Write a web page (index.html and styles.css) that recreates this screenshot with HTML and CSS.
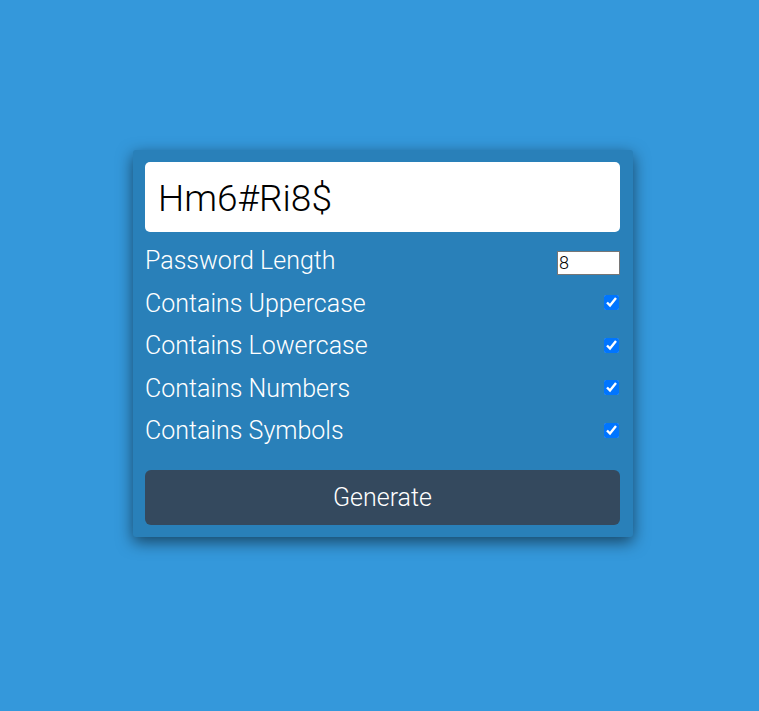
FILE: index.html
```html
<!DOCTYPE html>
<html lang="en">
<head>
<meta charset="utf-8">
<meta name="viewport" content="width=device-width, initial-scale=1">
<title>Password Generator</title>
<link rel="stylesheet" href="styles.css">
</head>
<body>
<main class="generator">
  <input class="result" type="text" value="Hm6#Ri8$" aria-label="Generated password" readonly>
  <div class="settings">
    <div class="setting">
      <label for="length">Password Length</label>
      <input class="length" id="length" type="number" min="4" max="20" value="8">
    </div>
    <div class="setting">
      <label for="uppercase">Contains Uppercase</label>
      <input class="check" id="uppercase" type="checkbox" checked>
    </div>
    <div class="setting">
      <label for="lowercase">Contains Lowercase</label>
      <input class="check" id="lowercase" type="checkbox" checked>
    </div>
    <div class="setting">
      <label for="numbers">Contains Numbers</label>
      <input class="check" id="numbers" type="checkbox" checked>
    </div>
    <div class="setting">
      <label for="symbols">Contains Symbols</label>
      <input class="check" id="symbols" type="checkbox" checked>
    </div>
  </div>
  <button class="generate" type="button">Generate</button>
</main>
</body>
</html>
```
FILE: styles.css
```css
* {
  box-sizing: border-box;
}

body {
  margin: 0;
  min-height: 100vh;
  padding: 0 0 24px 7px;
  display: flex;
  align-items: center;
  justify-content: center;
  background: #3498db;
  color: #fff;
  font-family: Roboto, sans-serif;
  font-weight: 300;
}

.generator {
  width: 100%;
  max-width: 500px;
  padding: 12px 13px 12px 12px;
  display: flex;
  flex-direction: column;
  background: #2980b9;
  border-radius: 3px;
  box-shadow: 0 5px 16px rgba(0, 0, 0, 0.55);
}

.result {
  width: 100%;
  height: 70px;
  padding: 2px 13px 0;
  border: 0;
  border-radius: 5px;
  background: #fff;
  color: #000;
  font: inherit;
  font-size: 37px;
}

.settings {
  display: grid;
  align-content: space-between;
  min-height: 200px;
  margin: 14px 0 24px;
}

.setting {
  display: flex;
  align-items: center;
  justify-content: space-between;
  font-size: 25px;
  line-height: 30px;
}

.length {
  width: 63px;
  height: 24px;
  margin: 4px 0 0;
  padding: 1px;
  border: 1px solid #767676;
  background: #fff;
  color: #000;
  font: inherit;
  font-size: 18px;
}

.check {
  width: 15px;
  height: 15px;
  margin: 0 1px 2px 0;
}

.generate {
  height: 55px;
  border: 0;
  border-radius: 6px;
  background: #34495e;
  color: #fff;
  font: inherit;
  font-size: 25px;
}
```
